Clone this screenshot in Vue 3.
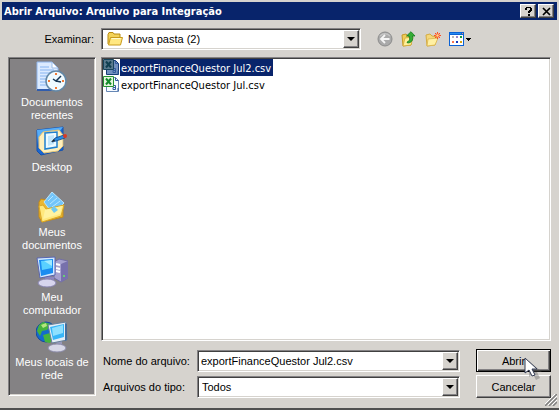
<script setup>
import { ref } from 'vue'

const folder = ref('Nova pasta (2)')
const fileName = ref('exportFinanceQuestor Jul2.csv')
const fileType = ref('Todos')
const files = ['exportFinanceQuestor Jul2.csv', 'exportFinanceQuestor Jul.csv']
const places = [
  { id: 'recent', lines: ['Documentos', 'recentes'] },
  { id: 'desktop', lines: ['Desktop'] },
  { id: 'documents', lines: ['Meus', 'documentos'] },
  { id: 'computer', lines: ['Meu', 'computador'] },
  { id: 'network', lines: ['Meus locais de', 'rede'] },
]
</script>

<template>
  <main class="dialog">
    <header class="titlebar">
      <h1>Abrir Arquivo: Arquivo para Integração</h1>
      <button class="caption" type="button" aria-label="Ajuda">
        <svg width="11" height="11" viewBox="0 0 11 11" shape-rendering="crispEdges"><path d="M3 1h5v1h1v3H8v1H7v1H5V5h1V4h1V2H4v2H2V2h1zM5 8h2v2H5z" /></svg>
      </button>
      <button class="caption" type="button" aria-label="Fechar">
        <svg width="11" height="11" viewBox="0 0 11 11"><path d="M2 2l7 7M9 2l-7 7" stroke="#000" stroke-width="1.7" /></svg>
      </button>
    </header>

    <div class="body">
      <label class="look" for="folder">Examinar:</label>
      <div class="lookrow">
        <div class="combo">
          <svg class="folder" width="16" height="16" viewBox="0 0 16 16">
            <path d="M1 13V3.500l1-2h4l1 1.500h6v3" fill="#f3d258" stroke="#b98b13" />
            <path d="M3.500 6.500H15.500L13.500 14H1.500z" fill="#ffe780" stroke="#c89a1c" />
            <path d="M4.500 7.500h9" stroke="#fffbd0" />
          </svg>
          <select id="folder" v-model="folder"><option>Nova pasta (2)</option></select>
          <span class="drop" aria-hidden="true"></span>
        </div>
        <nav class="tools" aria-label="Navegação">
          <button type="button" aria-label="Voltar" disabled>
            <svg width="16" height="16" viewBox="0 0 16 16">
              <circle cx="8" cy="8" r="7" fill="#aaa" stroke="#8c8c8c" />
              <path d="M3 5a6 5 0 0 1 10 0" fill="none" stroke="#c5c5c5" stroke-width="1.500" />
              <path d="M12.500 8H4.500M8 4L4 8l4 4" fill="none" stroke="#f5f5f5" stroke-width="1.800" />
            </svg>
          </button>
          <button type="button" aria-label="Um nível acima">
            <svg width="16" height="16" viewBox="0 0 16 16">
              <path d="M1 4l4-1 2 2 4 1-1 8-8 1z" fill="#f0cc57" stroke="#c69a29" />
              <path d="M4 7l8-1-2 8-8 1z" fill="#fff09a" stroke="#d0a52f" stroke-width=".7" />
              <path d="M6 11c3-1 3-3 2-6H5.500L10 .700 14 5h-2.500c1 4-1 7-5 7z" fill="#35ad35" stroke="#117b1d" stroke-width=".8" />
            </svg>
          </button>
          <button type="button" aria-label="Criar nova pasta">
            <svg width="16" height="16" viewBox="0 0 16 16">
              <path d="M1 4l4-1 2 2 5 1-2 8-8 1z" fill="#f4d77b" stroke="#d5ad42" />
              <path d="M3 8l10-1-3 7-8 1z" fill="#fff0a3" stroke="#d9b34b" stroke-width=".8" />
              <path d="M12.500 1v7M9 4.500h7M10 2l5 5M15 2l-5 5" stroke="#ff4b23" />
              <circle cx="12.500" cy="4.500" r="1.700" fill="#ffd68a" stroke="#ff5a2a" />
            </svg>
          </button>
          <button class="view" type="button" aria-label="Menu Exibir">
            <svg width="24" height="16" viewBox="0 0 24 16" shape-rendering="crispEdges">
              <path d="M0 1h15v14H0z" fill="#0b62d5" /><path d="M1 4h13v10H1z" fill="#fff" />
              <path d="M1 2h11v1H1z" fill="#278bf0" /><path d="M13 2h1v1h-1z" fill="#ef8c6b" />
              <path d="M3 5h2v2H3z" fill="#b9b9b9" /><path d="M7 5h2v2H7z" fill="#9885c8" /><path d="M11 5h2v2h-2z" fill="#159b35" />
              <path d="M3 10h2v2H3z" fill="#fb7650" /><path d="M7 10h2v2H7z" fill="#1437bb" /><path d="M11 10h2v2h-2z" fill="#d7a414" />
              <path d="M17 7h5v1h-1v1h-1v1h-1V9h-1V8h-1z" fill="#000" />
            </svg>
          </button>
        </nav>
      </div>

      <nav class="places" aria-label="Locais">
        <button v-for="place in places" :key="place.id" type="button" class="place">
          <svg v-if="place.id === 'recent'" width="32" height="32" viewBox="0 0 32 32">
            <path d="M1 1h15l6 6v22H1z" fill="#dcebff" stroke="#8eb5ec" />
            <path d="M16 1v6h6z" fill="#fff" stroke="#9bbce8" />
            <path d="M4 6h9M4 9h14M4 12h12M4 15h8M4 18h7M4 21h6M4 24h8" stroke="#86b4f1" />
            <path d="M1 29h21" stroke="#315dad" stroke-width="2" />
            <circle cx="20" cy="20" r="10" fill="#d8edf5" stroke="#6388a7" stroke-width="1.500" />
            <circle cx="20" cy="20" r="8.300" fill="#eefaff" stroke="#fff" />
            <path d="M20 12v2M20 26v2M12 20h2M26 20h2" stroke="#f07a36" stroke-width="2" />
            <path d="M25 15l-5 5-3-2M20 20l5 1" fill="none" stroke="#173653" stroke-width="1.500" />
          </svg>
          <svg v-else-if="place.id === 'desktop'" width="32" height="32" viewBox="0 0 32 32">
            <path d="M1 4l26-3v23l-22 5-4-4z" fill="#1c67cf" stroke="#1552ae" stroke-linejoin="round" />
            <path d="M1 4l26-3-3 4-15 1-6 5-1 8z" fill="#57adf8" />
            <path d="M7 6l16-2 4 5v11l-5 5-14 2-5-5V11z" fill="#fff0bd" stroke="#e4c375" />
            <path d="M9 7l12-1v15L9 23z" fill="#eefaff" stroke="#2180cf" stroke-width="1.500" />
            <path d="M12 10l6-1v9l-6 2z" fill="#c2e6fc" />
            <path d="M16 16l3-4 9-3 1 3-9 3z" fill="#288be2" stroke="#174886" stroke-width=".8" />
            <path d="M15 16l4-1-1-2z" fill="#222" /><circle cx="29" cy="10" r="2" fill="#d93a24" />
          </svg>
          <svg v-else-if="place.id === 'documents'" width="32" height="32" viewBox="0 0 32 32">
            <path d="M3 11l2-3 7 1 3 3 12 1v13l-21 5-3-5z" fill="#eab732" stroke="#c58b16" />
            <path d="M8 11L16 1l12 11-11 11z" fill="#73c5fa" stroke="#b8e5ff" />
            <path d="M12 10l5-5M14 13l7-6M16 16l8-6" stroke="#b7e6ff" />
            <path d="M3 15l4-1 3 4 18-4-3 11-19 6z" fill="#ffe87d" stroke="#dba928" stroke-linejoin="round" />
            <path d="M9 19l17-4-2 8-17 5z" fill="#fff2a0" /><path d="M15 18l3-3 4 4-4 3z" fill="#72c9ef" />
          </svg>
          <svg v-else-if="place.id === 'computer'" width="32" height="32" viewBox="0 0 32 32">
            <path d="M18 6l5-3 9 2v17l-7 4-7-4z" fill="#a6a2cf" stroke="#726da4" />
            <path d="M25 8l7-3v17l-7 4z" fill="#7771ac" /><path d="M20 8l4 1M20 12l4 1M20 15l4 1" stroke="#fff" stroke-width="2" />
            <circle cx="28" cy="20" r="1" fill="#63ef64" />
            <path d="M9 20l9 1v5H9z" fill="#8d87bd" /><ellipse cx="11" cy="27" rx="9" ry="4" fill="#d7d5ee" stroke="#8884b0" />
            <path d="M1 2l18-1v18L4 22z" fill="#d2e8ff" stroke="#5965af" stroke-linejoin="round" />
            <path d="M3 4l14-1v14L5 20z" fill="#198cf0" /><path d="M5 5l11-1v8L6 14z" fill="#59d0ff" />
            <path d="M8 5l8-1v6z" fill="#a2eaff" />
          </svg>
          <svg v-else width="32" height="32" viewBox="0 0 32 32">
            <circle cx="10" cy="11" r="10" fill="#146acc" stroke="#154a9c" />
            <path d="M7 1l8 2-4 6-5 1-2 5-3-5 2-6zM7 14l7-2 4 4-4 6-5-1z" fill="#45b33e" />
            <path d="M5 4l5-2 1 3-4 2z" fill="#b5e67f" />
            <path d="M21 19l5-1v6h-6z" fill="#9999b9" /><ellipse cx="21" cy="27" rx="9" ry="4" fill="#d7d7e6" stroke="#8b8ba9" />
            <path d="M12 4l18-3 1 18-15 3z" fill="#e3edf6" stroke="#68809b" stroke-linejoin="round" />
            <path d="M14 6l14-3v13l-11 3z" fill="#37b5f8" /><path d="M16 7l11-3v8l-10 3z" fill="#8ee0ff" />
            <path d="M29 2l2 1v16l-2 1z" fill="#456d9b" />
          </svg>
          <span v-for="line in place.lines" :key="line">{{ line }}</span>
        </button>
      </nav>

      <section class="content">
        <ul class="files" aria-label="Arquivos">
          <li v-for="file in files" :key="file">
            <button type="button" :class="['file', { selected: file === fileName }]" @click="fileName = file">
              <svg width="17" height="17" viewBox="0 0 17 17">
                <path class="sheet" d="M3.500 1.500h9l3 3v11h-12z" />
                <path class="fold" d="M12.500 1.500v3h3" />
                <path class="letter" d="M10 9.500h2.500v4H10v-2h2M15 12v3" />
                <path class="badge" d="M.500.500h10v10H.500z" />
                <path class="cross" d="M3 2.500l5 6M8 2.500l-5 6" />
              </svg>
              <span>{{ file }}</span>
            </button>
          </li>
        </ul>
        <form class="fields" @submit.prevent>
          <label for="name">Nome do arquivo:</label>
          <div class="combo">
            <input id="name" v-model="fileName" type="text" spellcheck="false">
            <button class="drop" type="button" aria-label="Nomes recentes"></button>
          </div>
          <button class="push default" type="submit">Abrir
            <svg class="pointer" width="20" height="26" viewBox="0 0 20 26" aria-hidden="true">
              <path d="M5 4v16l4-3 3 6 4-2-3-6h5z" fill="#555" opacity=".35" />
              <path d="M1 1v15l4-3 3 6 3-1-3-6h5z" fill="#fff" stroke="#343c54" />
            </svg>
          </button>
          <label for="type">Arquivos do tipo:</label>
          <div class="combo">
            <select id="type" v-model="fileType"><option>Todos</option></select>
            <span class="drop" aria-hidden="true"></span>
          </div>
          <button class="push" type="button">Cancelar</button>
        </form>
      </section>
    </div>
    <svg class="grip" width="12" height="12" viewBox="0 0 12 12" aria-hidden="true">
      <path d="M0 12L12 0M4 12l8-8M8 12l4-4" stroke="#808080" stroke-width="1.500" />
      <path d="M-1 11L11-1M3 11l9-9M7 11l5-5" stroke="#fff" />
    </svg>
  </main>
</template>

<style>
body { margin: 0; background: #d6d3ce; }
</style>

<style scoped>
* { box-sizing: border-box; }
.dialog {
  position: relative;
  padding: 2px 2px 10px;
  background: #d6d3ce;
  border-bottom: 2px solid #505050;
  color: #000;
  font: 11px/14px "Liberation Sans", Arial, sans-serif;
}
button, input, select { font: inherit; color: inherit; margin: 0; padding: 0; border: 0; border-radius: 0; }
svg { display: block; flex: none; }
.titlebar { display: flex; align-items: center; height: 18px; padding: 0 3px 0 2px; background: #08246b; }
h1 { flex: 1; margin: 0; color: #fff; font: bold 11px/18px "DejaVu Sans Condensed", Tahoma, sans-serif; white-space: nowrap; padding-top: 1px; }
.caption, .drop, .push {
  background: #d6d3ce;
  border: 1px solid;
  border-color: #fff #404040 #404040 #fff;
  box-shadow: inset -1px -1px #848284;
}
.caption { display: grid; place-items: center; width: 16px; height: 14px; }
.caption + .caption { margin-left: 2px; }
.body { display: grid; grid-template-columns: 88px 1fr; column-gap: 5px; row-gap: 7px; padding: 8px 6px 0 6px; }
.look { padding-right: 2px; text-align: right; line-height: 22px; }
.lookrow { display: grid; grid-template-columns: 1fr 190px; }
.combo, .files, .places {
  border: 1px solid;
  border-color: #848284 #fff #fff #848284;
  box-shadow: inset 1px 1px #404040, inset -1px -1px #d6d3ce;
}
.combo { display: flex; align-items: stretch; min-width: 0; height: 22px; padding: 1px; background: #fff; }
.combo input, .combo select { flex: 1; min-width: 0; padding: 0 2px; background: transparent; appearance: none; outline: 0; }
.combo select { padding-left: 3px; }
.folder { align-self: center; margin: 0 2px 0 4px; }
.drop { display: grid; place-items: center; width: 16px; flex: none; }
.drop::before { content: ""; border: 4px solid transparent; border-top-color: #000; border-bottom: 0; }
.tools { display: flex; align-items: center; gap: 8px; padding-left: 16px; }
.tools button { background: none; }
.places { display: flex; flex-direction: column; height: 339px; padding: 3px 0 0; background: #848284; }
.place { display: flex; flex-direction: column; align-items: center; height: 65px; background: none; color: #fff; line-height: 13px; white-space: nowrap; }
.place svg { margin-bottom: 3px; }
.content { min-width: 0; }
.files { height: 284px; margin: 0; padding: 1px; list-style: none; background: #fff; font: 11px/19px "DejaVu Sans Condensed", Tahoma, sans-serif; }
.file { display: flex; height: 17px; background: none; white-space: nowrap; }
.file span { height: 17px; padding: 0 2px 0 1px; }
.selected span { background: #08246b; color: #fff; }
.sheet { fill: #f6faff; stroke: #6687b5; }
.fold, .letter { fill: none; stroke: #315b9d; }
.badge { fill: #e5f5df; stroke: #269332; }
.cross { fill: none; stroke: #138b2b; stroke-width: 2; }
.selected .sheet { fill: #7290be; stroke: #173d78; }
.selected .badge { fill: #58798d; stroke: #17445c; }
.selected .cross { stroke: #103f51; }
.fields { display: grid; grid-template-columns: 96px 1fr 75px; row-gap: 3px; align-items: center; margin-top: 8px; }
.fields label { padding-left: 2px; white-space: nowrap; }
.fields .combo { margin-right: 16px; }
.push { position: relative; height: 23px; text-align: center; }
.default { border-color: #000; box-shadow: inset 1px 1px #fff, inset -1px -1px #404040, inset -2px -2px #848284; }
.pointer { position: absolute; left: 47px; top: 7px; z-index: 1; }
.grip { position: absolute; right: 2px; bottom: 2px; }
</style>
